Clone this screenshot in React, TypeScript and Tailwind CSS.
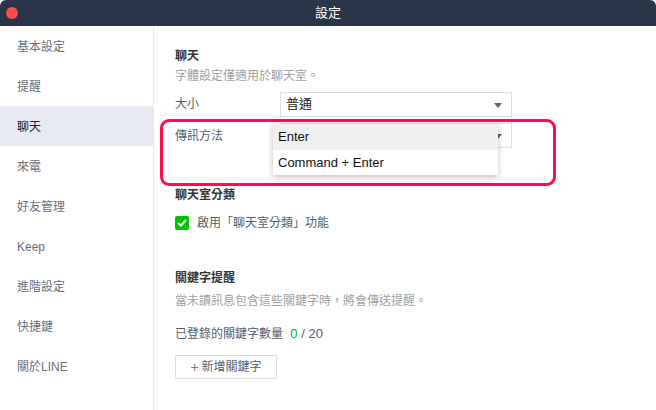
import React from "react";

const font = { fontFamily: '"Liberation Sans", "Noto Sans CJK TC", sans-serif' };

function Arrow() {
  return (
    <svg width="8" height="5" viewBox="0 0 8 5" className="absolute right-[9px] top-[10px]">
      <path d="M0 0 L8 0 L4 5 Z" fill="#5b6374" />
    </svg>
  );
}

export default function App() {
  const items = ["基本設定", "提醒", "聊天", "來電", "好友管理", "Keep", "進階設定", "快捷鍵", "關於LINE"];
  return (
    <div className="w-[656px] h-[410px] bg-white overflow-hidden relative" style={font}>
      <div className="h-[26px] bg-[#2b3549] rounded-t-[6px] relative flex items-center justify-center">
        <div className="absolute left-[6px] top-[7px] w-[12px] h-[12px] rounded-full bg-[#fc4c4a]" />
        <span className="text-[13px] text-white">設定</span>
      </div>
      <div className="flex h-[384px]">
        <div className="w-[154px] border-r border-[#e9eaec] flex flex-col">
          {items.map((t) => (
            <div
              key={t}
              className={`h-[40px] flex items-center pl-[17px] pt-[2px] text-[12px] ${t === "聊天" ? "bg-[#e8eaf1] text-[#222]" : "text-[#6b6f78]"}`}
            >
              {t}
            </div>
          ))}
        </div>
        <div className="flex-1 pl-[21px] pt-[21px] relative">
          <div className="text-[12px] leading-[18px] font-bold text-[#333]">聊天</div>
          <div className="mt-[2px] text-[12px] leading-[18px] text-[#a0a0a0]">字體設定僅適用於聊天室。</div>
          <div className="mt-[7px] flex items-center h-[24px]">
            <div className="w-[105px] text-[12px] text-[#555d6d]">大小</div>
            <div className="relative w-[232px] h-[25px] border border-[#dcdee2] flex items-center pl-[5px] text-[13px] text-[#222]">
              普通
              <Arrow />
            </div>
          </div>
          <div className="mt-[7px] flex items-center h-[25px]">
            <div className="w-[105px] text-[12px] text-[#555d6d]">傳訊方法</div>
            <div className="relative w-[232px] h-[25px] border border-[#dcdee2]">
              <Arrow />
            </div>
          </div>
          <div className="mt-[38px] text-[12px] leading-[18px] font-bold text-[#333]">聊天室分類</div>
          <div className="mt-[10px] flex items-center h-[18px]">
            <div className="w-[14px] h-[14px] rounded-[2px] bg-[#00c300] flex items-center justify-center">
              <svg width="10" height="8" viewBox="0 0 10 8">
                <path d="M1 4 L4 6.5 L9 1" stroke="white" strokeWidth="2" fill="none" />
              </svg>
            </div>
            <span className="ml-[8px] text-[12px] text-[#555d6d]">啟用「聊天室分類」功能</span>
          </div>
          <div className="mt-[37px] text-[12px] leading-[18px] font-bold text-[#333]">關鍵字提醒</div>
          <div className="mt-[5px] text-[12px] leading-[18px] text-[#a0a0a0]">當未讀訊息包含這些關鍵字時，將會傳送提醒。</div>
          <div className="mt-[15px] text-[12px] leading-[18px] text-[#555d6d]">
            已登錄的關鍵字數量 <span className="ml-[4px] text-[13px] text-[#00b300]">0</span>
            <span className="text-[13px]"> / 20</span>
          </div>
          <div className="mt-[12px] w-[102px] h-[24px] border border-[#dcdee2] flex items-center justify-center text-[12px] text-[#555d6d]">
            <span className="text-[14px] mr-[3px] text-[#777]">+</span>新增關鍵字
          </div>

          <div className="absolute left-[6px] top-[93px] w-[396px] h-[67px] border-[3px] border-[#ff0a4a] rounded-[9px]" />
          <div className="absolute left-[119px] top-[98px] w-[225px] bg-white shadow-[0_2px_6px_rgba(0,0,0,0.25)] text-[13px] text-[#111]">
            <div className="h-[26px] bg-[#efefef] flex items-center pl-[5px]">Enter</div>
            <div className="h-[25px] flex items-center pl-[5px]">Command + Enter</div>
          </div>
        </div>
      </div>
    </div>
  );
}
